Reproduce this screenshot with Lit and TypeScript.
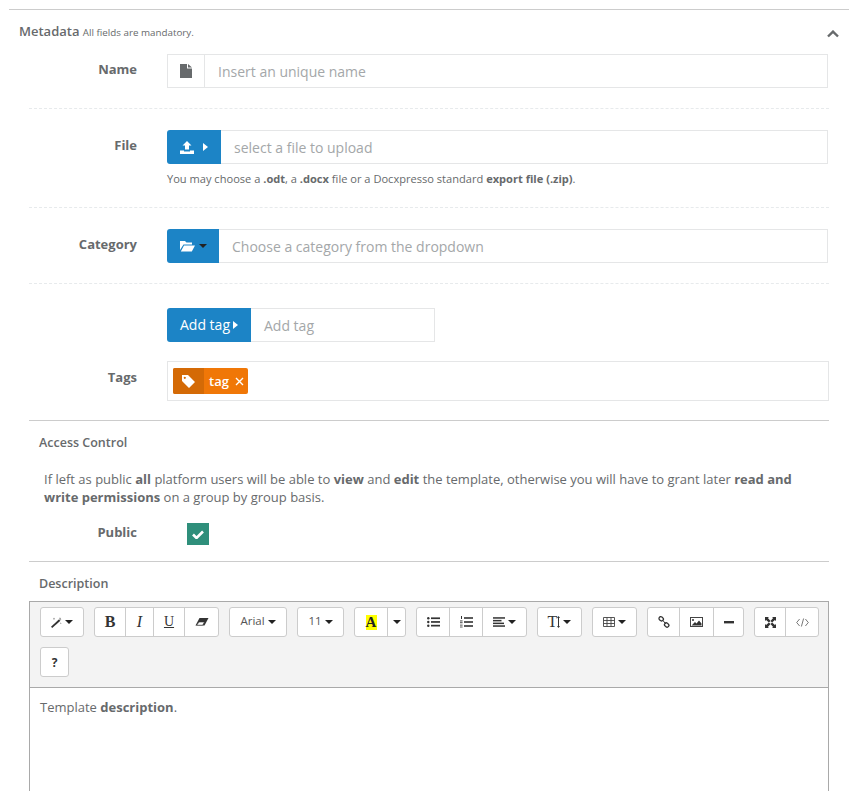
import { LitElement, html, css, svg } from "lit";
import { customElement } from "lit/decorators.js";

const ic = (w: number, h: number, body: unknown, cls = "") =>
  html`<svg class=${cls} width=${w} height=${h} viewBox="0 0 ${w} ${h}" aria-hidden="true">${body}</svg>`;

const caret = () => ic(8, 4, svg`<path d="M0 0h8L4 4z" fill="currentColor"/>`, "caret");

const icons: Record<string, unknown> = {
  wand: ic(11, 11, svg`<path d="M1.2 11 0 9.8 7.8 2.4 9.4 3.8z" fill="#333"/><path d="M8.6.2l.4.9.9-.3-.3.9.9.5-1 .2-.2 1-.6-1-.9.1.6-.8z M3 .5l.4.9.9.4-.9.4L3 3.1l-.4-.9-.9-.4.9-.4z M9.8 5.2l.3.7.7.3-.7.3-.3.7-.3-.7-.7-.3.7-.3z" fill="#888"/>`),
  eraser: ic(14, 10, svg`<path d="M4.5 1H13.5L9.5 8.5H.5z" fill="#333"/><path d="M1.6 8.2 4 5h5.5L7.6 8.2z" fill="#fff" stroke="#333" stroke-width=".6"/>`),
  ul: ic(13, 10, svg`<g fill="#333"><circle cx="1.3" cy="1.3" r="1.2"/><circle cx="1.3" cy="5" r="1.2"/><circle cx="1.3" cy="8.7" r="1.2"/><rect x="4" y=".4" width="9" height="1.7"/><rect x="4" y="4.1" width="9" height="1.7"/><rect x="4" y="7.8" width="9" height="1.7"/></g>`),
  ol: ic(13, 12, svg`<g fill="#333"><rect x="4" y="1.2" width="9" height="1.6"/><rect x="4" y="5.2" width="9" height="1.6"/><rect x="4" y="9.2" width="9" height="1.6"/><rect x="1" y="0" width="1" height="3"/><rect x="0" y="4.5" width="2.6" height=".9"/><rect x="0" y="6.3" width="2.6" height=".9"/><rect x="0" y="8.7" width="2.6" height=".8"/><rect x="0" y="10.6" width="2.6" height=".8"/></g>`),
  align: ic(12, 10, svg`<g fill="#333"><rect width="12" height="1.5" y=".2"/><rect width="8.5" height="1.5" y="2.9"/><rect width="11" height="1.5" y="5.6"/><rect width="12" height="1.5" y="8.3"/></g>`),
  table: ic(12, 10, svg`<path d="M.5.5h11v9H.5zM.5 3.5h11M.5 6.5h11M4 .5v9M8 .5v9" fill="none" stroke="#444" stroke-width=".9"/>`),
  link: ic(12, 12, svg`<g fill="none" stroke="#333" stroke-width="1.3"><rect x=".9" y="1" width="4.6" height="3.6" rx="1.8" transform="rotate(38 3.2 2.8)"/><rect x="6.4" y="7.2" width="4.6" height="3.6" rx="1.8" transform="rotate(38 8.7 9)"/><path d="M4.5 4l3 3.6" stroke-width="1"/></g>`),
  image: ic(13, 10, svg`<rect x=".5" y=".5" width="12" height="9" fill="#fff" stroke="#444"/><circle cx="3" cy="3" r="1" fill="#333"/><path d="M1.5 8.5 5 5l1.5 1.5L9 3.5l2.5 3v2z" fill="#333"/>`),
  minus: ic(10, 3, svg`<rect width="10" height="2.4" fill="#333"/>`),
  full: ic(11, 11, svg`<g fill="#333"><path d="M0 0h4L2.9 1.1 5.5 3.9 3.9 5.5 1.1 2.9 0 4zM11 0v4L9.9 2.9 7.1 5.5 5.5 3.9 8.1 1.1 7 0zM0 11V7l1.1 1.1L3.9 5.5l1.6 1.6-2.6 2.8L4 11zM11 11H7l1.1-1.1L5.5 7.1l1.6-1.6 2.8 2.6L11 7z"/></g>`),
  code: ic(13, 9, svg`<path d="M3.6 1 .7 4.5l2.9 3.5M9.4 1l2.9 3.5L9.4 8M7.6.5 5.4 8.5" fill="none" stroke="#555" stroke-width=".8"/>`),
  tbar: ic(3, 12, svg`<path d="M1.5 0 3 2H2v8h1l-1.5 2L0 10h1V2H0z" fill="#333"/>`),
};

type Btn = { w: number; c: unknown };
const t = (s: string, cls: string) => html`<span class=${cls}>${s}</span>`;

const groups: Btn[][] = [
  [{ w: 44, c: html`${icons.wand}${caret()}` }],
  [
    { w: 31, c: t("B", "tb-b") },
    { w: 28, c: t("I", "tb-i") },
    { w: 31, c: t("U", "tb-u") },
    { w: 35, c: icons.eraser },
  ],
  [{ w: 58, c: html`<span class="tb-arial">Arial</span>${caret()}` }],
  [{ w: 47, c: html`<span class="tb-arial">11</span>${caret()}` }],
  [
    { w: 33, c: t("A", "tb-a") },
    { w: 19, c: caret() },
  ],
  [
    { w: 33, c: icons.ul },
    { w: 33, c: icons.ol },
    { w: 45, c: html`${icons.align}${caret()}` },
  ],
  [{ w: 45, c: html`<span class="tb-t">T</span>${icons.tbar}${caret()}` }],
  [{ w: 45, c: html`${icons.table}${caret()}` }],
  [
    { w: 32, c: icons.link },
    { w: 34, c: icons.image },
    { w: 31, c: icons.minus },
  ],
  [
    { w: 31, c: icons.full },
    { w: 34, c: icons.code },
  ],
  [{ w: 29, c: t("?", "tb-q") }],
];

const btnWidth = (g: Btn[], i: number) => g[i].w - (i === 0 ? 1 : 0) - (i === g.length - 1 ? 1 : 0);

@customElement("app-root")
export class AppRoot extends LitElement {
  static styles = css`
    :host {
      display: block;
      font-family: "Open Sans", sans-serif;
      font-size: 13px;
      line-height: 18px;
      color: #676a6c;
      background: #fff;
      height: 791px;
      overflow: hidden;
    }
    .panel {
      margin: 9px 12px 0 9px;
      border-top: 1px solid #ccc;
    }
    .head {
      display: flex;
      align-items: center;
      justify-content: space-between;
      height: 44px;
      padding: 0 10px 0 10px;
    }
    .head-title {
      font-size: 13px;
      font-weight: 600;
      color: #676a6c;
    }
    .head-title small {
      font-size: 9.8px;
      font-weight: 400;
    }
    .chev {
      position: relative;
      top: 2px;
      color: #676a6c;
    }
    .body {
      padding-left: 20px;
    }
    .row {
      display: grid;
      grid-template-columns: 108px 661px;
      column-gap: 30px;
      align-items: start;
    }
    .label {
      text-align: right;
      font-weight: 700;
      font-size: 13px;
      line-height: 18px;
      padding-top: 6px;
    }
    .dash {
      border-top: 1px dashed #e7eaec;
      width: 800px;
    }
    .group {
      display: flex;
      height: 34px;
      box-sizing: border-box;
    }
    .addon {
      flex: none;
      display: flex;
      align-items: center;
      justify-content: center;
      box-sizing: border-box;
      height: 34px;
    }
    .addon.plain {
      width: 38px;
      border: 1px solid #e5e6e7;
      color: #676a6c;
    }
    .addon.blue {
      background: #1c84c6;
      color: #fff;
      border-radius: 3px 0 0 3px;
    }
    .field {
      flex: 1;
      min-width: 0;
      box-sizing: border-box;
      height: 34px;
      border: 1px solid #e5e6e7;
      border-left: none;
      display: flex;
      align-items: center;
      padding: 2px 0 0 13px;
      font-size: 14px;
      color: #a4a7a9;
    }
    .help {
      font-size: 11.08px;
      line-height: 14px;
      margin-top: 8px;
    }
    .help b { font-weight: 700; }
    .tagbox {
      box-sizing: border-box;
      width: 662px;
      height: 40px;
      border: 1px solid #e5e6e7;
      padding: 6px 5px;
      display: flex;
    }
    .tag {
      display: flex;
      height: 26px;
      border-radius: 2px;
      overflow: hidden;
      color: #fff;
      background: #f07707;
      font-weight: 600;
      font-size: 13px;
      line-height: 26px;
    }
    .tag-icon {
      width: 31px;
      background: #d46a06;
      display: flex;
      align-items: center;
      justify-content: center;
    }
    .tag-text {
      padding-left: 5px;
      width: 44px;
      box-sizing: border-box;
      display: flex;
      gap: 6px;
      align-items: center;
    }
    .rule {
      border-top: 1px solid #ccc;
      width: 800px;
    }
    .sub {
      font-size: 12.5px;
      font-weight: 600;
      padding-left: 10px;
      line-height: 18px;
    }
    .para {
      margin: 0;
      padding-left: 15px;
      width: 770px;
      font-size: 13px;
      line-height: 18px;
    }
    .para b { font-weight: 700; }
    .check {
      width: 22px;
      height: 22px;
      background: #2f8f7b;
      display: flex;
      align-items: center;
      justify-content: center;
      margin-left: 20px;
    }
    .editor {
      box-sizing: border-box;
      width: 800px;
      border: 1px solid #a9a9a9;
      border-bottom: none;
      height: 300px;
    }
    .toolbar {
      background: #f3f3f3;
      border-bottom: 1px solid #a9a9a9;
      padding: 0 5px 5px 10px;
      display: flex;
      flex-wrap: wrap;
      column-gap: 10px;
      height: 86px;
      box-sizing: border-box;
      align-content: flex-start;
    }
    .btn-group {
      display: flex;
      margin: 5px 0;
      background: #fff;
      border: 1px solid #ccc;
      border-radius: 3px;
      height: 30px;
      box-sizing: border-box;
      overflow: hidden;
    }
    .btn {
      box-sizing: border-box;
      display: flex;
      align-items: center;
      justify-content: center;
      gap: 3px;
      border-left: 1px solid #ccc;
      color: #333;
      height: 100%;
    }
    .btn:first-child { border-left: none; }
    .caret { flex: none; color: #222; }
    .tb-b { font: 700 16px "Liberation Serif", serif; color: #333; }
    .tb-i { font: italic 400 16px "Liberation Serif", serif; color: #333; }
    .tb-u { font: 400 14px "Liberation Serif", serif; color: #333; text-decoration: underline; }
    .tb-arial { font: 400 11.5px/14px "Open Sans", sans-serif; color: #555; position: relative; top: -1px; }
    .tb-a { font: 700 15px/15px "Liberation Serif", serif; color: #222; background: #ff0; width: 11px; text-align: center; }
    .tb-t { font: 400 16px "Liberation Serif", serif; color: #333; margin-right: -3px; }
    .tb-q { font: 700 12px "Open Sans", sans-serif; color: #333; }
    .content {
      padding: 10px;
      font-size: 13px;
      line-height: 18px;
    }
    .content b { font-weight: 700; }
  `;

  render() {
    return html`
      <div class="panel">
        <div class="head">
          <span class="head-title">Metadata <small>All fields are mandatory.</small></span>
          ${ic(12, 8, svg`<path d="M1 6.5 6 1.6l5 4.9" fill="none" stroke="currentColor" stroke-width="2.4"/>`, "chev")}
        </div>
        <div class="body">
          <div class="row">
            <div class="label">Name</div>
            <div class="group">
              <div class="addon plain">
                ${ic(12, 14, svg`<path d="M0 0h7v4.5h5V14H0zM8 0l4 3.5H8z" fill="currentColor"/>`)}
              </div>
              <div class="field">Insert an unique name</div>
            </div>
          </div>
          <div class="dash" style="margin-top:20px"></div>
          <div class="row" style="margin-top:21px">
            <div class="label">File</div>
            <div>
              <div class="group">
                <div class="addon blue" style="width:54px;gap:9px">
                  ${ic(14, 13, svg`<path d="M7 0l4.5 4.5H9v4H5v-4H2.5z M0 9.5h4v1h6v-1h4V13H0z" fill="#fff"/>`)}
                  ${ic(5, 8, svg`<path d="M0 0l5 4-5 4z" fill="#fff"/>`)}
                </div>
                <div class="field">select a file to upload</div>
              </div>
              <div class="help">You may choose a <b>.odt</b>, a <b>.docx</b> file or a Docxpresso standard <b>export file (.zip)</b>.</div>
            </div>
          </div>
          <div class="dash" style="margin-top:21px"></div>
          <div class="row" style="margin-top:21px">
            <div class="label">Category</div>
            <div class="group">
              <div class="addon blue" style="width:52px;gap:4px">
                ${ic(15, 12, svg`<path d="M0 1h5l1.5 1.5H12V4.5H3.5L0 10z M.8 11.5 4 5.5h11l-3.2 6z" fill="#fff"/>`)}
                ${caret()}
              </div>
              <div class="field">Choose a category from the dropdown</div>
            </div>
          </div>
          <div class="dash" style="margin-top:20px"></div>
          <div class="row" style="margin-top:24px">
            <div></div>
            <div class="group" style="width:268px">
              <div class="addon blue" style="width:84px;gap:3px;font-size:14px">
                Add tag${ic(5, 8, svg`<path d="M0 0l5 4-5 4z" fill="#fff"/>`)}
              </div>
              <div class="field" style="border-top:1px solid #e5e6e7">Add tag</div>
            </div>
          </div>
          <div class="row" style="margin-top:19px">
            <div class="label" style="padding-top:7px">Tags</div>
            <div class="tagbox">
              <div class="tag">
                <span class="tag-icon">
                  ${ic(13, 13, svg`<path d="M0 0h6l7 7-6 6-7-7z M2.8 1.7a1.1 1.1 0 1 0 .01 0z" fill="#fff" fill-rule="evenodd"/>`)}
                </span>
                <span class="tag-text">tag
                  ${ic(9, 9, svg`<path d="M1 1l7 7M8 1 1 8" stroke="#fff" stroke-width="1.4"/>`)}
                </span>
              </div>
            </div>
          </div>
          <div class="rule" style="margin-top:19px"></div>
          <div class="sub" style="margin-top:13px">Access Control</div>
          <p class="para" style="margin-top:18px">If left as public <b>all</b> platform users will be able to <b>view</b> and <b>edit</b> the template, otherwise you will have to grant later <b>read and write permissions</b> on a group by group basis.</p>
          <div class="row" style="margin-top:17px">
            <div class="label" style="padding-top:0">Public</div>
            <div class="check">
              ${ic(12, 9, svg`<path d="M1 4.5 4.5 8 11 1.5" fill="none" stroke="#fff" stroke-width="2.6"/>`)}
            </div>
          </div>
          <div class="rule" style="margin-top:16px"></div>
          <div class="sub" style="margin-top:13px">Description</div>
          <div class="editor" style="margin-top:8px">
            <div class="toolbar">
              ${groups.map(
                (g) => html`<div class="btn-group">
                  ${g.map((_, i) => html`<div class="btn" style="width:${btnWidth(g, i)}px">${g[i].c}</div>`)}
                </div>`
              )}
            </div>
            <div class="content">Template <b>description</b>.</div>
          </div>
        </div>
      </div>
    `;
  }
}
